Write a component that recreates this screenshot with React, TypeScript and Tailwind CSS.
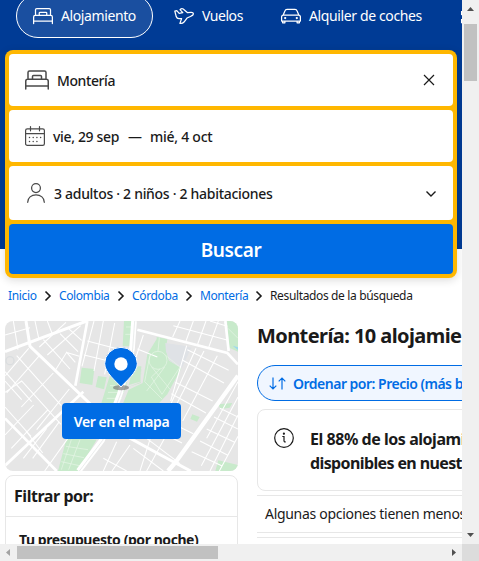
import type { ReactNode } from "react";

const BED =
  "M2.75 12h18.5c.69 0 1.25.56 1.25 1.25V18l.75-.75H.75l.75.75v-4.75c0-.69.56-1.25 1.25-1.25zm0-1.5A2.75 2.75 0 0 0 0 13.25V18c0 .414.336.75.75.75h22.5A.75.75 0 0 0 24 18v-4.75a2.75 2.75 0 0 0-2.75-2.75H2.75zM0 18v3a.75.75 0 0 0 1.5 0v-3A.75.75 0 0 0 0 18zm22.5 0v3a.75.75 0 0 0 1.5 0v-3a.75.75 0 0 0-1.5 0zm-.75-6.75V4.5a2.25 2.25 0 0 0-2.25-2.25h-15A2.25 2.25 0 0 0 2.25 4.5v6.75a.75.75 0 0 0 1.5 0V4.5a.75.75 0 0 1 .75-.75h15a.75.75 0 0 1 .75.75v6.75a.75.75 0 0 0 1.5 0zm-13.25-3h7a.25.25 0 0 1 .25.25v2.75l.75-.75h-9l.75.75V8.5a.25.25 0 0 1 .25-.25zm0-1.5A1.75 1.75 0 0 0 6.75 8.5v2.75c0 .414.336.75.75.75h9a.75.75 0 0 0 .75-.75V8.5a1.75 1.75 0 0 0-1.75-1.75h-7z";

function BedIcon({ className }: { className: string }) {
  return (
    <svg viewBox="0 0 24 24" className={className} fill="currentColor">
      <path d={BED} />
    </svg>
  );
}

function PlaneIcon() {
  return (
    <svg viewBox="0 0 20 20" className="size-5 shrink-0" fill="none" stroke="currentColor" strokeWidth="1.25" strokeLinejoin="round" strokeLinecap="round">
      <path d="M.8 5 2.800 4.600 5.200 7.300 8.800 6.700 6 3.600C7 2.700 8.300 2.500 9.200 3L13.600 6.700 17 6.300C18.500 6.200 19.500 7.100 19.300 8.100 19.200 9 18.300 9.700 17 10.200L13 12 10 16C9 17.200 7.500 17.700 5.900 17.400L7.600 12.600 5 12.700C3.500 12.700 2.700 12 2.300 10.800Z" />
    </svg>
  );
}

function CarIcon() {
  return (
    <svg viewBox="0 0 20 20" className="size-5 shrink-0" fill="none" stroke="currentColor" strokeWidth="1.25" strokeLinejoin="round" strokeLinecap="round">
      <path d="M2.2 9 4 4.8C4.300 3.900 5 3.400 6 3.400h8c1 0 1.700.5 2 1.400l1.800 4.200M2.500 9h15c1.100 0 1.900.8 1.900 1.900v4.200H.6v-4.200c0-1.100.8-1.900 1.900-1.900ZM1.600 15.100v1.700h2.300v-1.700M16.100 15.100v1.700h2.300v-1.700" />
      <circle cx="4.200" cy="12" r=".5" fill="currentColor" />
      <circle cx="15.800" cy="12" r=".5" fill="currentColor" />
    </svg>
  );
}

function CalendarIcon() {
  return (
    <svg viewBox="0 0 20 20" className="h-5 w-5 shrink-0" fill="none" stroke="#4a4a4a" strokeWidth="1.2" strokeLinecap="round">
      <rect x=".6" y="2.900" width="18.800" height="16.500" rx="1.700" />
      <path d="M.6 7.600h18.800M5.500.6v4.200M14.500.6v4.200" />
      <path d="M4.500 11.500h.01M8.200 11.500h.01M11.900 11.500h.01M15.600 11.500h.01M4.500 15.500h.01M8.200 15.500h.01M11.900 15.500h.01" strokeWidth="1.500" />
    </svg>
  );
}

function PersonIcon() {
  return (
    <svg viewBox="0 0 18 20" className="h-5 w-[18px] shrink-0" fill="none" stroke="#4a4a4a" strokeWidth="1.250" strokeLinecap="round">
      <circle cx="9" cy="5.100" r="4.400" />
      <path d="M.7 19.300C.7 14.700 4.300 11.900 9 11.900s8.300 2.800 8.300 7.400" />
    </svg>
  );
}

function Tab({ icon, label, width, active }: { icon: ReactNode; label: string; width: string; active?: boolean }) {
  return (
    <div className={`flex h-11 shrink-0 items-center gap-2 rounded-full border px-4 ${active ? "border-white bg-white/10" : "border-transparent"}`}>
      {icon}
      <span className={`whitespace-nowrap text-[14px] leading-5 ${width}`}>{label}</span>
    </div>
  );
}

function Crumb({ label, width }: { label: string; width: string }) {
  return (
    <>
      <span className={`shrink-0 text-[#006ce4] ${width}`}>{label}</span>
      <svg viewBox="0 0 8 12" className="mt-[3px] mr-[7px] ml-2 h-3 w-[8px] shrink-0" fill="none" stroke="#1a1a1a" strokeWidth="1.600">
        <path d="m1.500 1.500 4.500 4.500-4.500 4.500" />
      </svg>
    </>
  );
}

function MapArt() {
  return (
    <svg viewBox="15 18 699 450" className="block h-[150px] w-[233px]" preserveAspectRatio="none">
      <rect x="15" y="18" width="699" height="450" fill="#e6e6e6" />
      <g fill="#c8eacb">
        <path d="M372 18h28l-8 76h-24zM245 158l38 4-6 48-38-6zM294 183l26 4-8 36-25-7zM330 180l70-30 24 12-2 42-45 14-22 50h-52zM470 66l32 6-4 30 8 34 38 24-42 78-28 30H368l18-44 42-20 14-86 28-46zM200 368l90 6-56 94h-60zM681 18h33v92l-26-12zM655 268l42-4-8 14-28 4zM577 298l22 8-8 14-20-8zM655 436l59 14v18h-68z" />
      </g>
      <path d="M383 150l42-6-4 58-42 16z" fill="#e6e6e6" />
      <path d="M400 154l24 0-4 46-34 10z" fill="#c8eacb" />
      <path d="M496 84l56 8 22 6-28 60-36-20-12-28z" fill="#dfe2e6" />
      <g fill="none" stroke="#fff" strokeWidth="3.200">
        <path d="M15 60l75-22M40 18l14 86M105 18l12 56M142 18l16 42M118 96l80-74M142 120l100-88M180 56l54 54M205 40l40 36M130 74l80 88M198 112l40 12M166 166l34-54 26 30M262 78l100 26M252 120l84 20M282 18l-36 136M310 18l-28 150M344 24l-30 154" />
        <path d="M15 198l50 56M15 170l80 90M50 122l134 150M86 100l-70 82M118 122l-98 112M160 174l-96 102M208 222l-98 122M15 232l50-34 118 130M15 276l78 88M15 360l86-90M34 400l110-116M78 348l50 66M140 340l-70 90M178 320l-80 110M218 350l-84 118M100 400l68 68" />
        <path d="M430 60l-30 90M412 102l60 24M540 18l-22 48M580 18l-22 60M618 18l-26 72M655 18l-30 82M520 32l164 44M630 18l52 16M560 92L512 258M588 100l-92 204M612 108L478 368M652 122L548 318" />
        <path d="M562 104l124 62M548 136l124 68M526 202l112 56M514 236l104 58M470 302l110 54M450 336l96 48M714 200l-94 170M714 246l-110 206M714 300l-84 168M714 364l-56 104M660 280l54 26M642 306l72 36M620 342l84 40M600 378l82 42M575 410l90 42M470 310l-50 158M510 340l-70 128M400 400l90 68M440 370l100 76M350 380l-40 88M390 390l-54 78M310 430l70 38" />
      </g>
      <g fill="none" stroke="#e8f6e9" strokeWidth="2">
        <circle cx="474" cy="136" r="27" />
        <path d="M478 68l-4 40M450 120l-16 80 52 52M498 122l42 34-54 82-32-52 26-24M455 156l56 68M494 156l-54 72M330 212h46M324 232h48M320 250h46M198 394l66 10M190 416l62 12M184 440l54 12M214 374l-30 90M240 374l-34 90M378 36h18M376 58h18M684 40l30 30" />
      </g>
      <g fill="none" stroke="#fff">
        <path d="M15 110l245-92M78 18l12 76 272 260 120 66 90 48" strokeWidth="9" />
        <path d="M262 18l-36 194M412 44l270 70 32 34" strokeWidth="8" />
        <path d="M714 182L528 440l-24 28" strokeWidth="13" />
        <path d="M402 18l-6 84-36 134-54 140-70 92" strokeWidth="17" />
        <path d="M15 310l155 158M250 230L15 452M676 18l10 90" strokeWidth="8" />
      </g>
      <path d="M404 18l-6 84-36 134-54 140-70 92" fill="none" stroke="#dfe2e3" strokeWidth="2" />
      <circle cx="30" cy="137" r="12" fill="none" stroke="#dadddf" strokeWidth="4" />
      <path d="M698 92l16 5v8z" fill="#9cd8ee" />
      <ellipse cx="363" cy="218" rx="24" ry="8" fill="#777" fillOpacity=".65" />
      <path d="M363 216c-12-15-49-43-49-70a49 49 0 0 1 98 0c0 27-37 55-49 70z" fill="#006ce4" stroke="#fff" strokeWidth="3" />
      <circle cx="363" cy="147" r="20" fill="#fff" />
    </svg>
  );
}

export default function App() {
  return (
    <div className="grid h-[561px] w-[479px] grid-cols-[462px_17px] grid-rows-[544px_17px] overflow-hidden bg-white font-['Noto_Sans',sans-serif] text-[#1a1a1a]">
      <main className="h-[544px] w-[462px] overflow-hidden">
        <header className="h-[249px] bg-[#003b95]">
          <nav className="flex h-[50px] items-start gap-1 overflow-hidden pl-4 text-white">
            <div className="-mt-1.5 flex gap-1">
              <Tab active icon={<BedIcon className="size-5 shrink-0" />} label="Alojamiento" width="w-[75px] tracking-[-0.4px]" />
              <Tab icon={<PlaneIcon />} label="Vuelos" width="w-[41px] tracking-[-0.45px]" />
              <Tab icon={<CarIcon />} label="Alquiler de coches" width="w-[113px] tracking-[-0.38px]" />
              <Tab
                icon={
                  <svg viewBox="0 0 20 20" className="size-5 shrink-0" fill="none" stroke="currentColor" strokeWidth="1.250">
                    <path d="M5 4 1.600 5.500v3L5 10M1.600 13v3.500H7" />
                  </svg>
                }
                label=""
                width="w-[75px]"
              />
            </div>
          </nav>
          <div className="relative mx-[5px] flex h-[228px] flex-col gap-1 rounded-lg bg-[#ffb700] p-1 text-[14px] shadow-[0_2px_8px_rgba(26,26,26,0.16)]">
            <div className="flex h-[52px] items-center rounded bg-white pl-4">
              <BedIcon className="h-6 w-6 text-[#4a4a4a]" />
              <span className="ml-2 grow font-medium tracking-[-0.4px]">Montería</span>
              <svg viewBox="0 0 12 12" className="mr-[18px] size-3" fill="none" stroke="#1a1a1a" strokeWidth="1.200">
                <path d="m1 1 10 10M11 1 1 11" />
              </svg>
            </div>
            <div className="flex h-[52px] items-center rounded bg-white pl-4 font-medium">
              <CalendarIcon />
              <span className="ml-2 w-[67px] whitespace-nowrap tracking-[-0.34px]">vie, 29 sep</span>
              <span className="ml-2 w-[14px]">—</span>
              <span className="ml-2 whitespace-nowrap tracking-[-0.26px]">mié, 4 oct</span>
            </div>
            <div className="flex h-[54px] items-center rounded bg-white pl-[18px]">
              <PersonIcon />
              <span className="ml-[9px] grow font-medium whitespace-nowrap tracking-[-0.3px]">3 adultos · 2 niños · 2 habitaciones</span>
              <svg viewBox="0 0 12 8" className="mt-0.5 mr-4 h-2 w-3" fill="none" stroke="#1a1a1a" strokeWidth="1.400">
                <path d="m1.500 1.500 4.500 4.500 4.500-4.500" />
              </svg>
            </div>
            <button className="h-[50px] rounded bg-[#006ce4] pt-0.5 text-[19px] font-semibold tracking-[-0.4px] text-white">Buscar</button>
          </div>
        </header>

        <div className="flex h-[72px] items-start pt-[38px] pl-2 text-[12px] leading-[18px] whitespace-nowrap">
          <Crumb label="Inicio" width="w-7 tracking-[-0.35px]" />
          <Crumb label="Colombia" width="w-[50px] tracking-[-0.4px]" />
          <Crumb label="Córdoba" width="w-[45px] tracking-[-0.35px]" />
          <Crumb label="Montería" width="w-[47px] tracking-[-0.4px]" />
          <span className="tracking-[-0.36px]">Resultados de la búsqueda</span>
        </div>

        <div className="flex items-start gap-[19px] pl-[5px]">
          <aside className="w-[233px] shrink-0">
            <div className="relative h-[150px] overflow-hidden rounded-lg">
              <MapArt />
              <button className="absolute top-[82px] left-[57px] h-9 w-[119px] rounded bg-[#006ce4] text-[14px] font-semibold tracking-[-0.45px] whitespace-nowrap text-white">
                Ver en el mapa
              </button>
            </div>
            <div className="mt-1 h-[120px] rounded-t-lg border border-[#e7e7e7]">
              <h2 className="h-[41px] border-b border-[#e7e7e7] pt-2 pl-2 text-[16px] leading-6 font-bold tracking-[-0.45px]">Filtrar por:</h2>
              <h3 className="pt-[13px] pl-[13px] text-[14px] leading-5 font-bold tracking-[-0.44px]">Tu presupuesto (por noche)</h3>
            </div>
          </aside>
          <section className="w-[440px] shrink-0 whitespace-nowrap">
            <h1 className="mt-px text-[20px] leading-7 font-bold tracking-[-0.58px]">Montería: 10 alojamientos encontrados</h1>
            <div className="mt-[15px] flex h-9 items-center rounded-full border border-[#006ce4] bg-[#f0f6ff] pl-[11px] text-[#006ce4]">
              <svg viewBox="0 0 17 13" className="h-[13px] w-[17px]" fill="none" stroke="currentColor" strokeWidth="1.200">
                <path d="M4 .5v11.500M.7 8.700 4 12l3.300-3.300M13 12.500V1M9.700 4.300 13 1l3.300 3.300" />
              </svg>
              <span className="ml-[7px] text-[14px] font-semibold tracking-[-0.5px]">Ordenar por: Precio (más bajo primero)</span>
            </div>
            <div className="mt-2 flex h-[82px] rounded-lg border border-[#e7e7e7] pt-[17px] pl-4">
              <svg viewBox="0 0 20 20" className="mt-px size-5 shrink-0" fill="none" stroke="#1a1a1a" strokeWidth="1.200">
                <circle cx="10" cy="10" r="9.300" />
                <path d="M8.300 8.500H10v4.300c0 .8.500 1.300 1.700 1.100" />
                <circle cx="9.900" cy="5.700" r=".5" fill="#1a1a1a" />
              </svg>
              <p className="ml-4 text-[16px] leading-6 font-bold">
                <span className="tracking-[-0.46px]">El 88% de los alojamientos no están</span>
                <br />
                <span className="tracking-[-0.62px]">disponibles en nuestra página</span>
              </p>
            </div>
            <p className="mt-1 h-[38px] border-y border-[#e7e7e7] pt-2 pl-2 text-[14px] leading-5 tracking-[-0.3px]">Algunas opciones tienen menos disponibilidad</p>
            <div className="mt-1 h-10 border-t border-[#e7e7e7]" />
          </section>
        </div>
      </main>

      <div className="flex flex-col items-center justify-between bg-[#f0f0f0] py-[7px]">
        <div className="flex flex-col items-center gap-[13px]">
          <svg viewBox="0 0 7 4" className="h-1 w-[7px]" fill="#505050">
            <path d="M0 4 3.500 0 7 4z" />
          </svg>
          <div className="h-[57px] w-[13px] bg-[#c1c1c1]" />
        </div>
        <svg viewBox="0 0 7 4" className="h-1 w-[7px]" fill="#505050">
          <path d="m0 0 3.500 4L7 0z" />
        </svg>
      </div>

      <div className="flex items-center bg-[#f0f0f0] pr-[6px] pl-[6px]">
        <svg viewBox="0 0 4 7" className="h-[7px] w-1" fill="#a3a3a3">
          <path d="M4 0v7L0 3.500z" />
        </svg>
        <div className="ml-[7px] h-[13px] w-[201px] bg-[#c1c1c1]" />
        <svg viewBox="0 0 4 7" className="ml-auto h-[7px] w-1" fill="#505050">
          <path d="M0 0v7l4-3.500z" />
        </svg>
      </div>
      <div className="bg-[#dcdcdc]" />
    </div>
  );
}
